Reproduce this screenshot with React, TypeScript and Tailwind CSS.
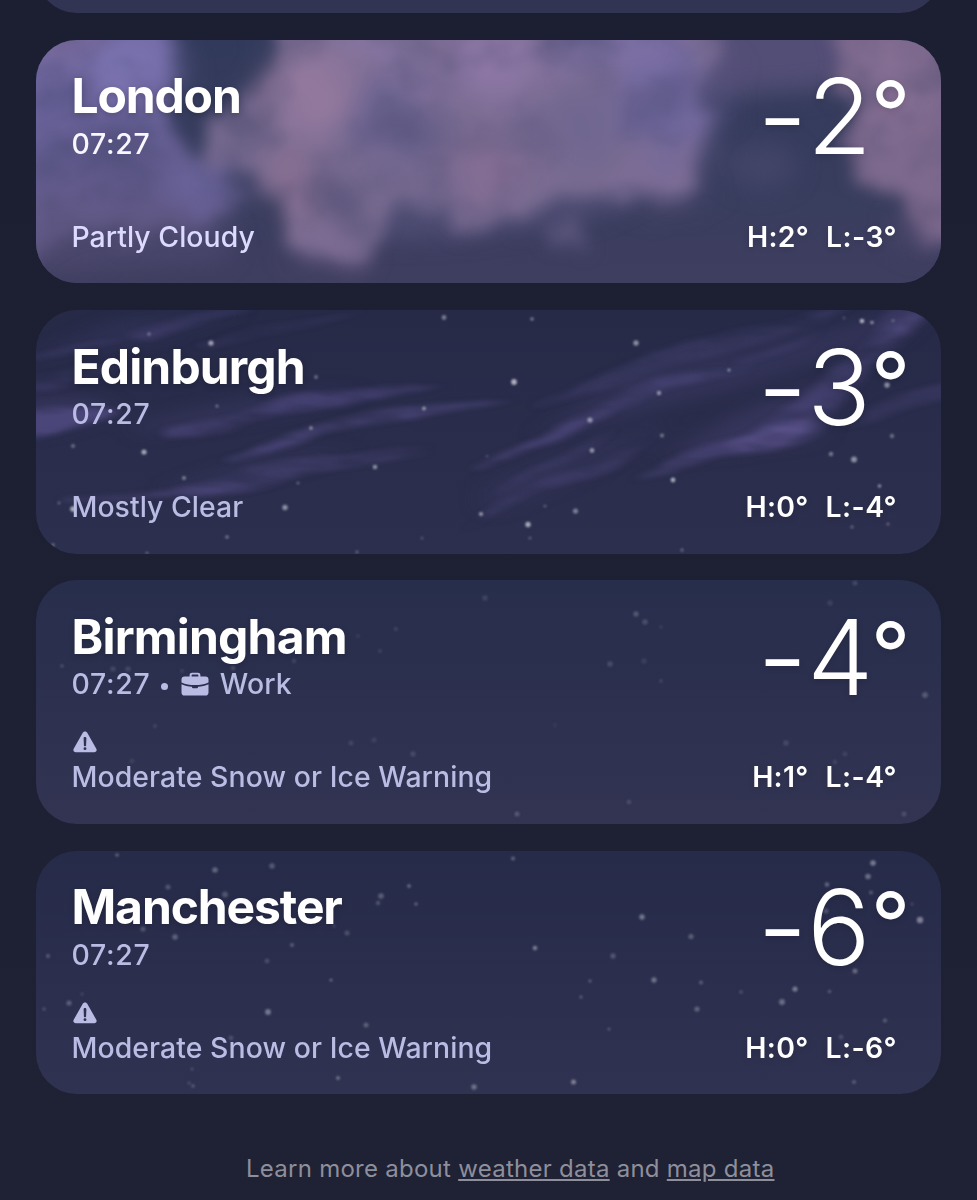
import type { ReactNode } from "react";

type Star = [number, number, number, number];

interface City {
  name: string;
  nameTracking: string;
  time: string;
  bright?: boolean;
  label?: string;
  condition: string;
  conditionTracking: string;
  warning?: boolean;
  digit: string;
  high: string;
  low: string;
  surface: string;
  art: ReactNode;
}

function Stars({ items, tint = "#cfd0dc" }: { items: Star[]; tint?: string }) {
  return (
    <g fill={tint} filter="url(#star-soft)">
      {items.map(([x, y, r, o], i) => (
        <circle key={i} cx={x} cy={y} r={r} opacity={o} />
      ))}
    </g>
  );
}

function Art({ children }: { children: ReactNode }) {
  return (
    <svg viewBox="0 0 905 243.5" preserveAspectRatio="none" className="absolute inset-0 h-full w-full" aria-hidden="true">
      <defs>
        <filter id="star-soft" x="-5%" y="-5%" width="110%" height="110%">
          <feGaussianBlur stdDeviation="0.8" />
        </filter>
      </defs>
      {children}
    </svg>
  );
}

function CloudSky() {
  return (
    <Art>
      <defs>
        <linearGradient id="cloud-base" x1="0" y1="0" x2="0" y2="1">
          <stop offset="0" stopColor="#323a5b" />
          <stop offset="0.6" stopColor="#383d5e" />
          <stop offset="1" stopColor="#3f3e60" />
        </linearGradient>
        <linearGradient id="cloud-left" x1="0" y1="0" x2="0.2" y2="1">
          <stop offset="0" stopColor="#7b70a8" />
          <stop offset="0.5" stopColor="#69629a" />
          <stop offset="1" stopColor="#5c547c" />
        </linearGradient>
        <filter id="cloud-warp" filterUnits="userSpaceOnUse" x="-80" y="-80" width="1080" height="410" colorInterpolationFilters="sRGB">
          <feTurbulence type="fractalNoise" baseFrequency="0.02 0.022" numOctaves="4" seed="8" result="n" />
          <feDisplacementMap in="SourceGraphic" in2="n" scale="58" xChannelSelector="R" yChannelSelector="G" result="d" />
          <feGaussianBlur in="d" stdDeviation="8" result="s" />
          <feTurbulence type="fractalNoise" baseFrequency="0.012 0.014" numOctaves="4" seed="14" />
          <feColorMatrix values="0 0 0 0 1  0 0 0 0 1  0 0 0 0 1  1.1 0 0 0 0.38" />
          <feGaussianBlur stdDeviation="3" result="m" />
          <feComposite in="s" in2="m" operator="in" />
        </filter>
        <filter id="cloud-tone" filterUnits="userSpaceOnUse" x="-100" y="-100" width="1120" height="450" colorInterpolationFilters="sRGB">
          <feGaussianBlur stdDeviation="15" />
        </filter>
        <filter id="cloud-haze" filterUnits="userSpaceOnUse" x="-100" y="-100" width="1120" height="450" colorInterpolationFilters="sRGB">
          <feGaussianBlur stdDeviation="12" />
        </filter>
      </defs>
      <rect width="905" height="244" fill="url(#cloud-base)" />
      <g filter="url(#cloud-haze)">
        <path d="M660-40H850L822 36 780 50 730 52 670 60Z" fill="#534e76" />
        <path d="M-40 180 200 190 190 220-40 236Z" fill="#534d75" opacity=".6" />
        <path d="M240 60 290 200 420 196 560 176 680 120 670 20Z" fill="#5b5680" opacity=".6" />
        <ellipse cx="725" cy="125" rx="36" ry="24" fill="#4a4970" opacity=".6" />
        <ellipse cx="885" cy="190" rx="30" ry="22" fill="#514b6f" opacity=".6" />
      </g>
      <g filter="url(#cloud-warp)">
        <path d="M-60-60H134L130 20 126 60 138 92 174 112 202 142 208 164 180 180 150 194 110 200 60 196 30 214-60 240Z" fill="url(#cloud-left)" />
        <path d="M230-60H686L680 20 672 60 672 100 658 138 620 156 590 158 556 160 520 158 496 176 460 194 430 182 400 168 356 180 322 204 290 230 258 216 250 190 240 164 206 138 176 118 170 92 196 68 224 46 240 16Z" fill="#7a6c92" />
        <path d="M500 182 530 172 550 192 546 208 520 202Z" fill="#5a557c" />
        <path d="M800-60H980V208L890 194 858 168 824 148 808 110 814 70 796 40Z" fill="#7d698d" />
        <g filter="url(#cloud-tone)">
          <ellipse cx="100" cy="28" rx="44" ry="34" fill="#7d75b3" opacity=".8" />
          <ellipse cx="30" cy="0" rx="45" ry="18" fill="#8c74a2" opacity=".7" />
          <ellipse cx="160" cy="145" rx="36" ry="26" fill="#6d68a5" opacity=".75" />
          <ellipse cx="85" cy="130" rx="30" ry="26" fill="#5c5688" opacity=".6" />
          <ellipse cx="270" cy="50" rx="46" ry="50" fill="#977a9f" opacity=".85" />
          <ellipse cx="258" cy="145" rx="28" ry="30" fill="#8e7091" opacity=".7" />
          <ellipse cx="360" cy="75" rx="40" ry="50" fill="#6b6491" opacity=".9" />
          <ellipse cx="340" cy="2" rx="40" ry="14" fill="#937eaf" opacity=".8" />
          <ellipse cx="452" cy="25" rx="54" ry="36" fill="#9079a8" opacity=".85" />
          <ellipse cx="455" cy="135" rx="36" ry="40" fill="#876e95" opacity=".8" />
          <ellipse cx="290" cy="204" rx="30" ry="18" fill="#806b92" opacity=".6" />
          <ellipse cx="540" cy="90" rx="44" ry="40" fill="#6f668f" opacity=".85" />
          <ellipse cx="630" cy="60" rx="48" ry="60" fill="#7067a0" opacity=".9" />
          <ellipse cx="580" cy="2" rx="70" ry="14" fill="#7f73b0" opacity=".8" />
          <ellipse cx="625" cy="142" rx="40" ry="14" fill="#806e9b" opacity=".7" />
          <ellipse cx="850" cy="40" rx="32" ry="44" fill="#8c7499" opacity=".7" />
          <ellipse cx="312" cy="156" rx="15" ry="18" fill="#3f4065" />
          <ellipse cx="400" cy="130" rx="14" ry="18" fill="#57547c" opacity=".7" />
        </g>
      </g>
    </Art>
  );
}

const edinburghStars: Star[] = [
  [113, 24, 1.8, 0.4], [175, 33, 2.6, 0.7], [121, 54, 1.8, 0.35], [408, 7.5, 2.4, 0.5], [280, 67, 2, 0.4],
  [181, 96, 1.6, 0.45], [388, 98.5, 2, 0.6], [275, 118, 1.8, 0.6], [37, 136, 2, 0.4], [108, 142, 2.6, 0.75],
  [339, 157, 2.3, 0.6], [148, 168, 2, 0.5], [262, 173, 1.6, 0.35], [23, 193, 1.7, 0.3], [37, 199, 2.8, 0.8],
  [249, 197.5, 2.7, 0.6], [445, 204, 2.1, 0.65], [191, 227, 1.8, 0.45], [386, 228, 1.5, 0.25],
  [17, 235, 1.7, 0.4], [111, 243, 1.5, 0.35], [321, 242, 1.7, 0.3], [496, 9, 1.8, 0.5], [600, 33, 2.7, 0.6],
  [478, 72, 2.9, 0.8], [693, 60, 1.6, 0.6], [623, 83, 2.2, 0.6], [554, 110, 2.6, 0.6], [626, 125.5, 2, 0.45],
  [556, 140.5, 2.4, 0.6], [637, 170, 2.4, 0.75], [509, 196, 1.6, 0.3], [539.5, 201, 2.6, 0.5], [492, 214.5, 2.7, 0.75],
  [494, 228, 1.6, 0.3], [646, 240, 1.7, 0.35], [826, 11, 2.3, 0.8], [836, 12.5, 1.8, 0.6], [857, 10.5, 1.6, 0.3],
  [808, 8, 1.4, 0.25], [851, 75, 2.7, 0.6], [856, 126, 2.2, 0.4], [795, 144, 2.3, 0.45], [818, 149.5, 3, 0.6],
  [843.5, 176, 1.8, 0.6], [816, 217, 1.8, 0.3], [852, 214, 1.6, 0.35], [451, 146, 1.3, 0.25],
];

function WispySky() {
  return (
    <Art>
      <defs>
        <filter id="wisp-a" filterUnits="userSpaceOnUse" x="-60" y="-60" width="1040" height="370" colorInterpolationFilters="sRGB">
          <feTurbulence type="fractalNoise" baseFrequency="0.009 0.03" numOctaves="3" seed="5" result="n" />
          <feDisplacementMap in="SourceGraphic" in2="n" scale="10" xChannelSelector="R" yChannelSelector="G" result="d" />
          <feGaussianBlur in="d" stdDeviation="6 2.800" result="s" />
          <feTurbulence type="fractalNoise" baseFrequency="0.012 0.04" numOctaves="3" seed="11" />
          <feColorMatrix values="0 0 0 0 1  0 0 0 0 1  0 0 0 0 1  1.8 0 0 0 -0.15" result="m" />
          <feComposite in="s" in2="m" operator="in" />
        </filter>
        <filter id="wisp-b" filterUnits="userSpaceOnUse" x="-60" y="-60" width="1040" height="370" colorInterpolationFilters="sRGB">
          <feGaussianBlur stdDeviation="14 8" />
        </filter>
      </defs>
      <g filter="url(#wisp-b)" fill="#444070" opacity=".75">
        <path d="M-20 95Q30 80 80 96Q50 118-20 125Z" opacity=".7" />
        <path d="M100 112Q220 80 330 80Q250 108 100 126Z" opacity=".45" />
        <path d="M130 178Q230 140 320 138Q240 172 130 184Z" opacity=".4" />
        <path d="M500 128Q590 50 700 40L900-10 860 30 700 80Z" opacity=".5" />
        <path d="M630 150Q700 90 800 70L780 130Z" opacity=".6" />
        <path d="M-10 50L80 10 210 0 120 30Z" opacity=".4" />
        <path d="M450 175Q530 140 640 110Q560 165 450 205Z" opacity=".4" />
      </g>
      <g filter="url(#wisp-a)" fill="#534c85" opacity=".88">
        <path d="M-10 46Q50 34 90 26Q50 44-10 54Z" opacity=".3" />
        <path d="M-10 68Q40 58 90 56Q40 78-10 80Z" opacity=".4" />
        <path d="M-20 102Q40 94 85 102Q40 124-20 132Z" opacity=".85" />
        <path d="M130 120Q200 106 240 90Q330 76 410 76Q320 96 240 108Q190 124 130 128Z" opacity=".65" />
        <path d="M190 150Q270 116 350 98Q430 88 480 92Q380 104 290 124Q230 146 190 154Z" opacity=".75" />
        <path d="M30 190Q150 184 210 158Q260 146 400 134Q300 148 255 162Q190 188 30 194Z" opacity=".6" />
        <path d="M150 184Q220 166 270 156Q330 146 400 140Q300 158 250 170Q220 186 150 188Z" opacity=".6" />
        <path d="M90 24Q140 4 220 0L180 10 110 30Z" opacity=".45" />
        <path d="M160 34Q230 10 330 0L260 20 170 38Z" opacity=".25" />
        <path d="M440 158Q540 112 600 76Q660 56 720 58Q650 72 580 98Q520 136 440 162Z" opacity=".75" />
        <path d="M460 180Q530 146 580 118L560 136Q510 162 460 184Z" opacity=".5" />
        <path d="M430 220Q480 174 530 164Q580 146 620 128Q570 172 500 182Z" opacity=".4" />
        <path d="M500 96Q610 40 690 22Q760 6 830-10Q760 30 680 42Q620 66 500 100Z" opacity=".35" />
        <path d="M700 48Q760 36 790 16L770 32Q740 46 700 52Z" opacity=".4" />
        <path d="M600 166Q660 134 700 128Q760 96 786 68Q840 34 860-6L900-6Q870 36 836 56Q804 96 780 126Q730 148 690 146Q650 158 600 168Z" opacity=".55" />
        <path d="M690 134Q730 112 780 106Q770 136 710 144Z" fill="#655b99" opacity=".7" />
        <path d="M815 112Q860 82 920 68V84Q870 102 815 118Z" opacity=".4" />
        <path d="M832 42Q862 16 884-6H898Q876 20 838 48Z" fill="#655b99" opacity=".6" />
      </g>
      <Stars items={edinburghStars} />
    </Art>
  );
}

const birminghamStars: Star[] = [
  [449, 18, 2.8, 0.14], [360, 49, 2.3, 0.12], [322, 56, 2, 0.1], [288, 65, 2.2, 0.12], [344, 71, 2, 0.12],
  [258, 81, 2.2, 0.14], [26, 86, 1.8, 0.2], [77, 89, 2.8, 0.15], [92, 89, 2.8, 0.15], [197, 88, 2.4, 0.2],
  [146, 91, 2, 0.12], [119, 146, 2.2, 0.12], [315, 163, 2.5, 0.14], [338, 160, 2.5, 0.12], [377, 174, 2.7, 0.16],
  [96, 181, 2.5, 0.1], [600, 34, 2.7, 0.26], [609, 42, 2.8, 0.2], [625, 47, 2, 0.1], [574, 84, 2.8, 0.18],
  [608, 81, 2.8, 0.1], [625, 101, 2, 0.14], [519, 145, 2, 0.07], [819, 3, 2.6, 0.16], [794, 23, 2.8, 0.12],
  [889, 115, 2.9, 0.26], [750, 163, 2.8, 0.16], [809, 174, 2.4, 0.12], [799, 182, 2.2, 0.13], [593, 222, 2.2, 0.18],
  [481, 234, 2.5, 0.24], [868, 234, 2.5, 0.18],
];

const manchesterStars: Star[] = [
  [81, 4, 1.8, 0.35], [179, 19, 2.8, 0.35], [236, 15, 2.8, 0.28], [132, 36, 2.6, 0.25], [189, 43.5, 3, 0.25],
  [373, 35, 2, 0.35], [345, 45, 2.8, 0.3], [342, 52, 2.2, 0.25], [380, 53, 1.7, 0.35], [107, 78, 2.6, 0.25],
  [139, 86, 2.8, 0.32], [298, 75, 1.5, 0.18], [311, 82, 2.5, 0.22], [12, 105, 1.9, 0.3], [256, 94, 2.1, 0.3],
  [231, 110, 2.4, 0.2], [295, 129, 1.6, 0.4], [33, 152, 2.6, 0.3], [46, 143, 1.8, 0.14], [8, 158, 1.8, 0.22],
  [232, 161, 2.9, 0.45], [330, 174, 2.5, 0.3], [195, 187, 2.4, 0.2], [156, 218, 1.6, 0.2], [302, 227, 2, 0.4],
  [153, 232, 1.6, 0.2], [157, 235, 1.8, 0.28], [438, 236, 2.7, 0.4], [477, 7.5, 2, 0.35], [606, 66, 2.7, 0.45],
  [655, 85.5, 2.6, 0.3], [499, 97, 2.3, 0.5], [577, 105, 2.7, 0.25], [618, 129, 2.7, 0.42], [554, 130, 1.7, 0.3],
  [665, 131.5, 1.9, 0.3], [545, 146, 1.7, 0.28], [705, 141, 1.9, 0.2], [661, 158, 2.6, 0.32], [573, 178, 1.6, 0.28],
  [837, 12, 2.8, 0.48], [832, 25.5, 2.8, 0.4], [791, 33.5, 2.3, 0.35], [835, 41.5, 2, 0.28], [790, 60, 2.6, 0.25],
  [876, 53, 1.5, 0.2], [884, 69, 3.2, 0.5], [819, 120, 2.5, 0.38], [759, 138, 2.6, 0.48], [746, 151, 3, 0.38],
  [793.5, 140.5, 1.8, 0.28], [849, 169.5, 2, 0.3], [805, 186, 2.4, 0.18], [537.5, 231, 2.5, 0.5], [818, 231, 2, 0.28],
];

function BriefcaseIcon() {
  return (
    <svg viewBox="0 0 28 24" className="h-6 w-7 fill-current" aria-hidden="true">
      <path
        fillRule="evenodd"
        d="M8.6 4.4V3.2C8.6 1.6 9.6.8 11.2.8h5.6c1.6 0 2.6.8 2.6 2.4v1.2h5c2 0 3.1 1.1 3.1 3.1v2.9C23.4 12.2 19 13.1 14 13.1S4.6 12.2.5 10.4V7.5c0-2 1.1-3.1 3.1-3.1zM10.6 4.4h6.8V3.5c0-.6-.3-.9-.9-.9h-5c-.6 0-.9.3-.9.9z"
      />
      <path d="M.5 12.3c3.2 1.4 6.7 2.2 10.4 2.4.1 1 .7 1.5 1.7 1.5h2.8c1 0 1.6-.5 1.7-1.5 3.7-.2 7.2-1 10.4-2.4v8.1c0 2-1.1 3.1-3.1 3.1H3.6c-2 0-3.1-1.1-3.1-3.1z" />
    </svg>
  );
}

function WarningIcon() {
  return (
    <svg viewBox="0 0 24 22" className="h-[22px] w-6 fill-current" aria-hidden="true">
      <path
        fillRule="evenodd"
        d="M9.9 1.6c.9-1.6 3.3-1.6 4.2 0l9.2 16.2c.9 1.6-.2 3.5-2.1 3.5H2.8c-1.9 0-3-1.9-2.1-3.5zM10.6 7.3l.3 6.9c0 .7.4 1.1 1.1 1.1s1.1-.4 1.1-1.1l.3-6.9c0-.8-.6-1.3-1.4-1.3s-1.4.5-1.4 1.3zM12 16.2a1.45 1.45 0 1 0 0 2.9 1.45 1.45 0 0 0 0-2.9z"
      />
    </svg>
  );
}

const cities: City[] = [
  {
    name: "London",
    nameTracking: "tracking-[-1.15px]",
    time: "07:27",
    bright: true,
    condition: "Partly Cloudy",
    conditionTracking: "tracking-[0.03px]",
    digit: "2",
    high: "2",
    low: "3",
    surface: "bg-[#3a3d5e]",
    art: <CloudSky />,
  },
  {
    name: "Edinburgh",
    nameTracking: "tracking-[-0.85px]",
    time: "07:27",
    condition: "Mostly Clear",
    conditionTracking: "tracking-[0.03px]",
    digit: "3",
    high: "0",
    low: "4",
    surface: "bg-linear-to-b from-[#262a47] to-[#2d2f4e]",
    art: <WispySky />,
  },
  {
    name: "Birmingham",
    nameTracking: "tracking-[-0.8px]",
    time: "07:27",
    label: "Work",
    condition: "Moderate Snow or Ice Warning",
    conditionTracking: "tracking-[0.08px]",
    warning: true,
    digit: "4",
    high: "1",
    low: "4",
    surface: "bg-linear-to-b from-[#272e4c] via-[#2d304f] to-[#323452]",
    art: (
      <Art>
        <Stars items={birminghamStars} />
      </Art>
    ),
  },
  {
    name: "Manchester",
    nameTracking: "tracking-[-1.1px]",
    time: "07:27",
    condition: "Moderate Snow or Ice Warning",
    conditionTracking: "tracking-[0.08px]",
    warning: true,
    digit: "6",
    high: "0",
    low: "6",
    surface: "bg-linear-to-b from-[#262b49] via-[#2b2e4d] to-[#303251]",
    art: (
      <Art>
        <Stars items={manchesterStars} />
      </Art>
    ),
  },
];

function CityCard({ city }: { city: City }) {
  const soft = city.bright ? "text-[#dcdaff]" : "text-[#babce4]";
  return (
    <article className={`relative h-[243.5px] shrink-0 overflow-hidden rounded-[41px] ${city.surface}`}>
      {city.art}
      <div className="relative flex h-full justify-between pt-[32.5px] pr-9 pb-[32.5px] pl-[35.5px]">
        <div className={`flex flex-col whitespace-nowrap ${soft}`}>
          <h2 className={`text-[48px] leading-[48px] font-bold text-white text-shadow-[0_2px_6px_rgb(0_0_0/0.2)] ${city.nameTracking}`}>
            {city.name}
          </h2>
          <div className={`mt-[9.5px] flex h-7 items-center text-[28.4px] leading-7 font-medium tracking-[0.7px] ${city.bright ? "text-[#f8f7ff]" : ""}`}>
            <span>{city.time}</span>
            {city.label && (
              <>
                <span className="mt-1 ml-[11px] h-[7px] w-[7px] rounded-full bg-current" />
                <span className="ml-[13px]">
                  <BriefcaseIcon />
                </span>
                <span className="ml-[10.5px] tracking-[0.1px]">{city.label}</span>
              </>
            )}
          </div>
          <div className="mt-auto">
            {city.warning && (
              <div className="mb-[10px] ml-px">
                <WarningIcon />
              </div>
            )}
            <p className={`text-[28.4px] leading-7 font-[450] ${city.conditionTracking}`}>{city.condition}</p>
          </div>
        </div>
        <div className="flex flex-col items-end justify-between whitespace-nowrap text-white text-shadow-[0_2px_6px_rgb(0_0_0/0.15)]">
          <div className="-mt-[9px] -mr-[5.5px] flex items-start text-[105px] leading-[105px] font-[330]">
            <span className="text-[110px] leading-[107px] font-light">-</span>
            <span className="w-[63.5px] pr-[2px] text-center">{city.digit}</span>
            <span className="text-[87px] leading-[99px] font-[430]">°</span>
          </div>
          <div className="flex gap-[17px] pr-[8px] text-[28.4px] leading-7 font-[560] tracking-[0.3px]">
            <span>H:{city.high}°</span>
            <span className="tracking-[0.4px]">L:-{city.low}°</span>
          </div>
        </div>
      </div>
    </article>
  );
}

export default function App() {
  return (
    <main className="flex h-[1200px] w-[977px] flex-col overflow-hidden bg-linear-to-b from-[#1c1e31] to-[#1f2134] font-['Inter',sans-serif]">
      <section className="-mt-[230.7px] flex flex-col gap-[26.85px] px-9">
        <div className="h-[243.5px] shrink-0 rounded-[41px] bg-[#323453]" />
        {cities.map((city) => (
          <CityCard key={city.name} city={city} />
        ))}
      </section>
      <footer className="mt-[63px] pl-[246px] text-[24px] leading-6 tracking-[0.26px] whitespace-nowrap text-[#8e8f9b]">
        Learn more about <a className="underline">weather data</a> and <a className="underline">map data</a>
      </footer>
    </main>
  );
}
